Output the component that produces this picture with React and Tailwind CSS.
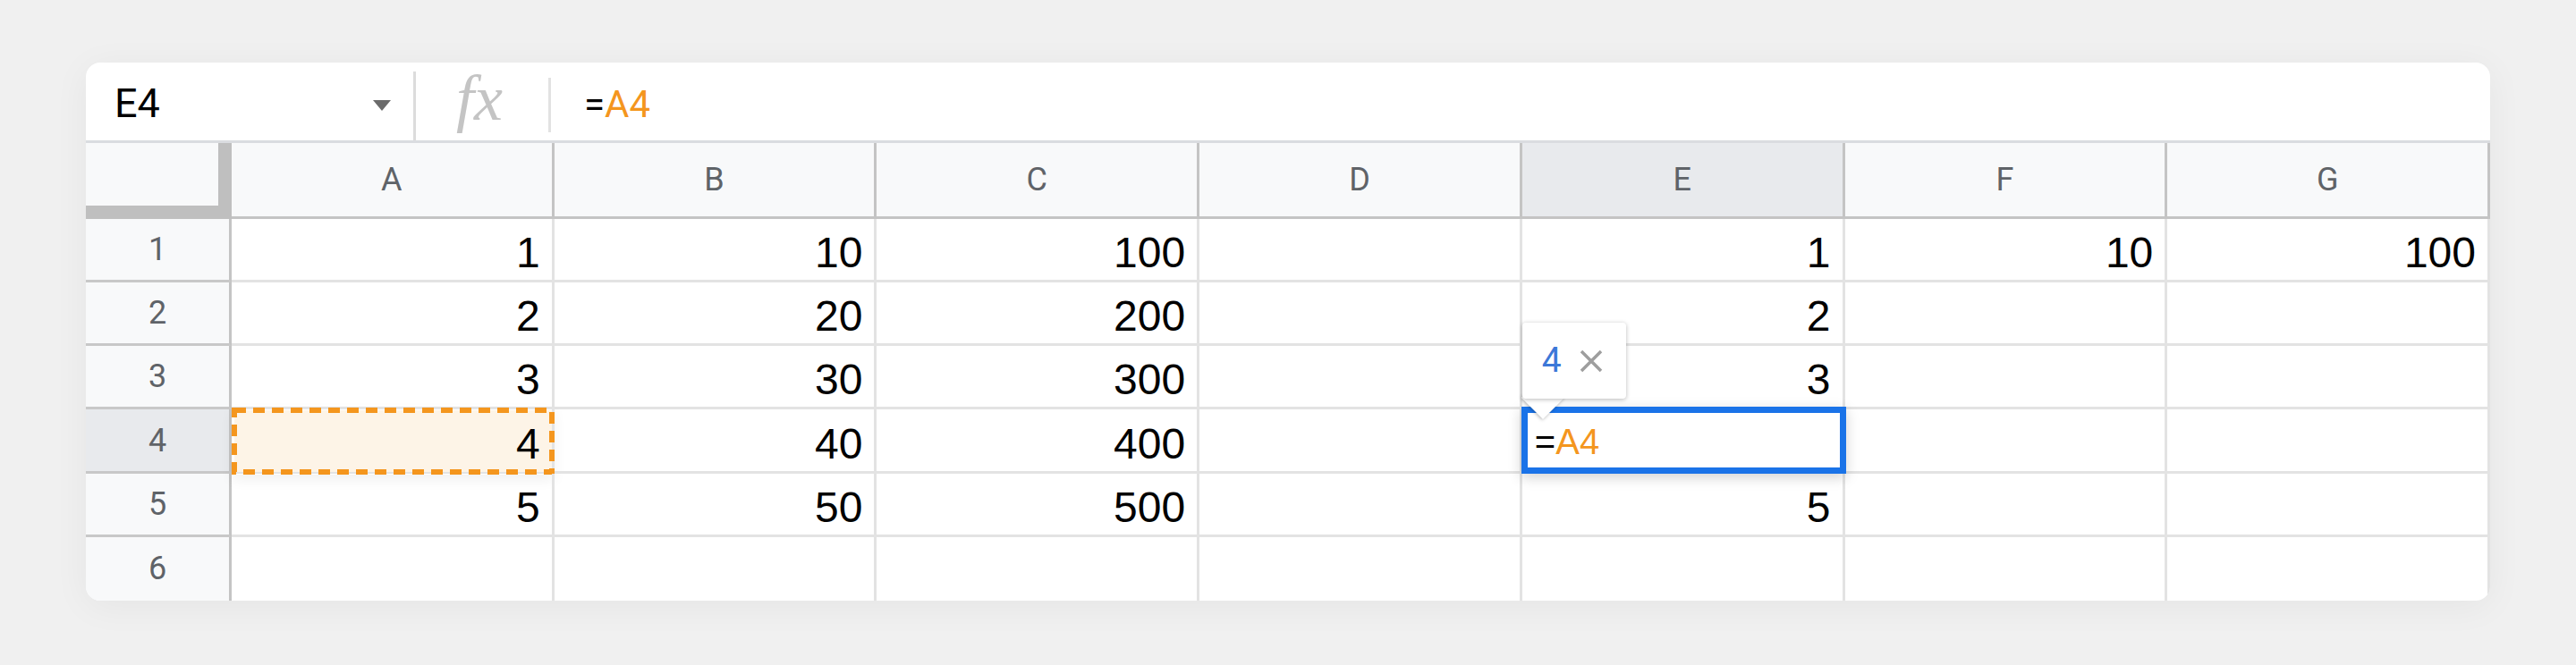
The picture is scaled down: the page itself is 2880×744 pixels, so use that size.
const COLS = ["A", "B", "C", "D", "E", "F", "G"];

const ROWS = [
  ["1", "10", "100", "", "1", "10", "100"],
  ["2", "20", "200", "", "2", "", ""],
  ["3", "30", "300", "", "3", "", ""],
  ["4", "40", "400", "", "", "", ""],
  ["5", "50", "500", "", "5", "", ""],
  ["", "", "", "", "", "", ""],
];

const ACTIVE = { row: 3, col: 4 }; // E4
const REF = { row: 3, col: 0 }; // A4

export default function App() {
  return (
    <div className="min-h-[744px] bg-[#f0f0f0] px-[96px] pt-[70px] pb-[72px]">
      <div className="h-[602px] rounded-[16px] bg-white overflow-hidden shadow-[0_6px_40px_rgba(0,0,0,0.05)]">
        <FormulaBar />
        <Sheet />
      </div>
    </div>
  );
}

function FormulaBar() {
  return (
    <div className="h-[90px] flex border-b-[3px] border-[#dadce0]">
      {/* name box */}
      <div className="w-[366px] flex items-center justify-between pl-[32px] pr-[25px] pt-[4px]">
        <span className="font-['Roboto',sans-serif] text-[45px] leading-none text-black">E4</span>
        <svg width="20" height="12" viewBox="0 0 20 12" className="mt-[4px]">
          <path d="M0 0h20L10 12z" fill="#6b6b6b" />
        </svg>
      </div>
      <div className="w-[3px] mt-[10px] bg-[#dcdcdc]" />

      {/* fx */}
      <div className="w-[148px] flex items-center justify-center">
        <span className="font-['Liberation_Serif',serif] italic text-[72px] leading-none text-[#c4c4c4] pb-[8px] pr-[6px]">
          fx
        </span>
      </div>
      <div className="w-[3px] h-[61px] mt-[17px] bg-[#e2e2e2]" />

      {/* formula */}
      <div className="flex-1 flex items-center pl-[37px] pt-[6px]">
        <span className="font-['Roboto',sans-serif] text-[42px] leading-none">
          <span className="text-black">=</span>
          <span className="text-[#f4961e]">A4</span>
        </span>
      </div>
    </div>
  );
}

function Sheet() {
  return (
    <div className="grid grid-cols-[163px_repeat(7,minmax(0,1fr))] grid-rows-[85px_repeat(6,minmax(0,1fr))] h-[512px]">
      {/* corner with frozen bars */}
      <div className="bg-[#f8f9fa] border-r-[15px] border-b-[15px] border-[#bfbfbf]" />
      {COLS.map((c, i) => (
        <div
          key={c}
          className={`flex items-center justify-center border-r-[3px] border-b-[3px] border-[#c4c4c4] font-['Roboto',sans-serif] text-[36px] leading-none text-[#5f6368] ${
            i === ACTIVE.col ? "bg-[#e8eaed]" : "bg-[#f8f9fa]"
          }`}
        >
          {c}
        </div>
      ))}

      {ROWS.map((row, r) => (
        <Row key={r} r={r} row={row} last={r === ROWS.length - 1} />
      ))}
    </div>
  );
}

function Row({ r, row, last }) {
  return (
    <>
      <div
        className={`flex items-center justify-center border-r-[3px] border-[#c4c4c4] font-['Roboto',sans-serif] text-[36px] leading-none text-[#5f6368] ${
          last ? "" : "border-b-[3px] border-b-[#c8c8c8]"
        } ${r === ACTIVE.row ? "bg-[#e8eaed]" : "bg-[#f8f9fa]"}`}
      >
        {r + 1}
      </div>
      {row.map((v, c) => {
        const isActive = r === ACTIVE.row && c === ACTIVE.col;
        const isRef = r === REF.row && c === REF.col;
        return (
          <div
            key={c}
            className={`relative flex items-center justify-end pr-[13px] pt-[8px] border-r-[3px] border-[#e3e3e3] ${
              last ? "" : "border-b-[3px]"
            }`}
          >
            {isRef && <RefBox />}
            {v && (
              <span className="relative font-['Liberation_Sans',Arial,sans-serif] text-[48px] leading-none text-black">
                {v}
              </span>
            )}
            {isActive && <Editor />}
          </div>
        );
      })}
    </>
  );
}

function RefBox() {
  return (
    <div className="absolute left-0 -top-[2px] w-[361px] h-[75px] shadow-[0_6px_14px_rgba(0,0,0,0.06)]">
      <svg width="361" height="75" viewBox="0 0 361 75" className="block">
        <rect
          x="3"
          y="3"
          width="355"
          height="69"
          fill="#fdf4e7"
          stroke="#f4961e"
          strokeWidth="6"
          strokeDasharray="13 8"
        />
      </svg>
    </div>
  );
}

function Editor() {
  return (
    <>
      <div className="absolute -left-[1px] -right-[4px] -top-[3px] -bottom-[3px] z-10 bg-white border-[7px] border-[#1a73e8] shadow-[0_4px_14px_rgba(0,0,0,0.18)] flex items-center pl-[8px] pt-[3px]">
        <span className="font-['Liberation_Sans',Arial,sans-serif] text-[40px] leading-none">
          <span className="text-black">=</span>
          <span className="text-[#f4961e]">A4</span>
        </span>
      </div>

      {/* reference preview tooltip */}
      <div className="absolute left-0 -top-[97px] w-[116px] h-[85px] z-20">
        <div className="absolute left-[6px] top-[67px] w-[34px] h-[34px] rotate-45 bg-white shadow-[0_1px_4px_rgba(0,0,0,0.3)]" />
        <div className="absolute inset-0 rounded-[4px] bg-white shadow-[0_1px_5px_rgba(0,0,0,0.28)] flex items-center pl-[22px] gap-[20px]">
          <span className="font-['Roboto',sans-serif] text-[39px] leading-none text-[#3c78d8]">4</span>
          <svg width="26" height="26" viewBox="0 0 26 26">
            <path d="M2 2L24 24M24 2L2 24" stroke="#9e9e9e" strokeWidth="3.5" />
          </svg>
        </div>
        <div className="absolute left-[6px] top-[60px] w-[34px] h-[25px] bg-white" />
      </div>
    </>
  );
}
